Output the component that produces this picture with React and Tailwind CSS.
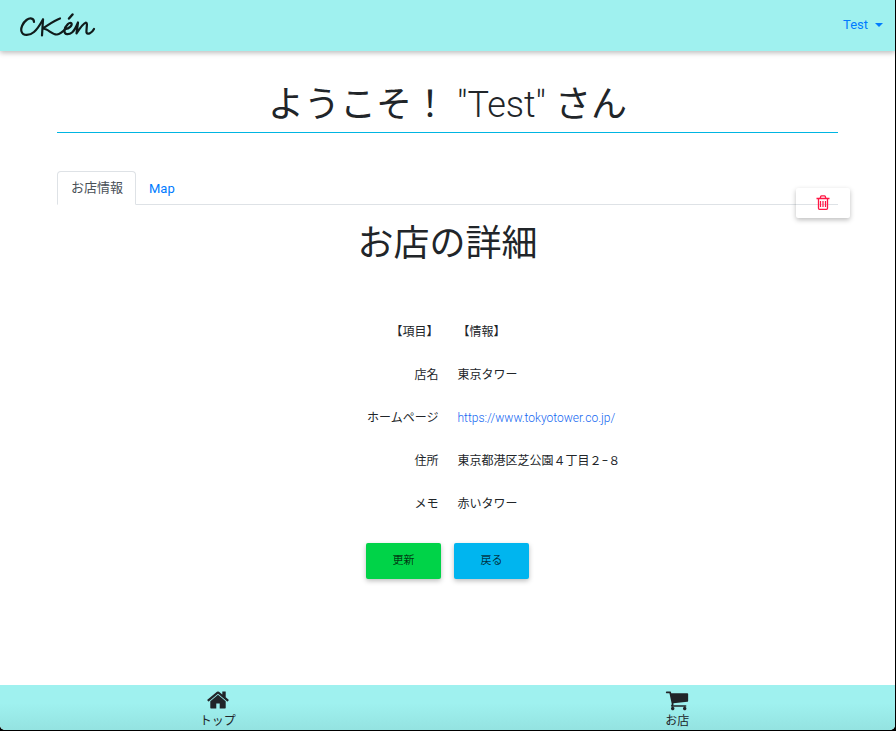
const rows = [
  ["【項目】", "【情報】"],
  ["店名", "東京タワー"],
  ["ホームページ", "https://www.tokyotower.co.jp/"],
  ["住所", "東京都港区芝公園４丁目２−８"],
  ["メモ", "赤いタワー"],
];

function Logo() {
  return (
    <svg
      viewBox="0 0 76 26"
      className="h-[26px] w-[76px]"
      fill="none"
      stroke="#101b1b"
      strokeWidth="2.200"
      strokeLinecap="round"
      strokeLinejoin="round"
      role="img"
      aria-label="CKén"
    >
      <path d="M14 9C14 5 10 4.500 6.500 7C2.500 10 .5 15.500 1.500 18.500C3 23.500 10 22.500 14 19C17.500 16 20.500 11 23 6.500" />
      <path d="M23 6.500L22 22.500M40 5.500C35 7 29 11.500 22.800 15.500C28 15.500 32 22 37 21.500C40.500 21 43.500 18 46 15.500" />
      <path d="M45.500 16C49 15.500 52.500 12.500 51.500 10.500C50 8.500 45 12.500 44.500 17.500C44 22.500 49.500 21.500 52 19.500C55 17 57 12 58 9.500L56.500 20.500C60 15 63 10.500 66 9.500C68 9.500 66 16.500 66.500 19.500C67.500 22 72 20 74 16" />
      <path d="M49 5.500L52.500 1.500" strokeWidth="2.400" />
    </svg>
  );
}

function TrashIcon() {
  return (
    <svg
      viewBox="0 0 14 15"
      className="h-[15px] w-[14px]"
      fill="none"
      stroke="currentColor"
      strokeWidth="1.300"
      strokeLinejoin="round"
      aria-hidden="true"
    >
      <path d="M.5 3.500H13.500M4.200 3.200L4.800 1.200Q5 .8 5.400 .8H8.600Q9 .8 9.200 1.200L9.800 3.200M2.500 3.500V13.300Q2.500 14.300 3.500 14.300H10.500Q11.500 14.300 11.500 13.300V3.500" />
      <path d="M4.500 6V12M7 6V12M9.500 6V12" strokeWidth="1.200" />
    </svg>
  );
}

function HomeIcon() {
  return (
    <svg viewBox="0 0 1792 1792" className="size-6" fill="currentColor" aria-hidden="true">
      <path d="M1472 992v480q0 26-19 45t-45 19h-384v-384h-256v384h-384q-26 0-45-19t-19-45v-480q0-1 .5-3t.5-3l575-474 575 474q1 2 1 6zm223-69l-62 74q-8 9-21 11h-3q-13 0-21-7l-692-577-692 577q-12 8-24 7-13-2-21-11l-62-74q-8-10-7-23.5t11-21.5l719-599q32-26 76-26t76 26l244 204v-195q0-14 9-23t23-9h192q14 0 23 9t9 23v408l219 182q10 8 11 21.5t-7 23.5z" />
    </svg>
  );
}

function CartIcon() {
  return (
    <svg viewBox="0 0 1792 1792" className="size-6" fill="currentColor" aria-hidden="true">
      <path d="M704 1536q0 52-38 90t-90 38-90-38-38-90 38-90 90-38 90 38 38 90zm896 0q0 52-38 90t-90 38-90-38-38-90 38-90 90-38 90 38 38 90zm128-1088v512q0 24-16.5 42.5t-40.5 21.5l-1044 122q13 60 13 70 0 16-24 64h920q26 0 45 19t19 45-19 45-45 19h-1024q-26 0-45-19t-19-45q0-11 8-31.5t16-36 21.5-40 15.5-29.5l-177-823h-204q-26 0-45-19t-19-45 19-45 45-19h256q16 0 28.5 6.5t19.5 15.5 13 24.500 8 26 5.5 29.5 4.5 26h1201q26 0 45 19t19 45z" />
    </svg>
  );
}

export default function App() {
  return (
    <div className="flex min-h-screen flex-col bg-black pr-px pb-px font-['Roboto','Noto_Sans_CJK_JP',sans-serif] text-[#212529]">
      <div className="flex grow flex-col overflow-hidden rounded-b-[5px] bg-white">
        <header className="flex h-[51px] shrink-0 items-center justify-between bg-[#9ff1ef] pr-3 pl-5 shadow-[0_2px_5px_rgba(0,0,0,0.26)]">
          <a href="#top">
            <Logo />
          </a>
          <button type="button" className="flex items-center gap-[7px] pb-[2px] text-[13px] text-[#007bff]">
            Test
            <span className="border-x-4 border-t-4 border-x-transparent border-t-current" />
          </button>
        </header>

        <main className="mx-[57px] grow">
          <h1 className="mt-6 border-b border-[#00b5e2] pt-[3px] text-center text-[36px] leading-[54px]">
            ようこそ！ <span className="font-light">"Test"</span> さん
          </h1>

          <div className="relative mt-[38px]">
            <nav className="flex border-b border-[#dee2e6] text-[13px] leading-5">
              <a
                href="#info"
                className="-mb-px rounded-t border border-[#dee2e6] border-b-white bg-white py-[6px] pr-3 pl-[13px] text-[#495057]"
              >
                お店情報
              </a>
              <a href="#map" className="px-[13px] pt-[8px] pb-[5px] text-[#007bff]">
                Map
              </a>
            </nav>
            <button
              type="button"
              aria-label="削除"
              className="absolute -right-3 top-[17px] flex h-[30px] w-[54px] items-center justify-center rounded-xs pb-[2px] text-[#ff1744] shadow-[0_2px_5px_rgba(0,0,0,0.26)]"
            >
              <TrashIcon />
            </button>
          </div>

          <h2 className="mt-3 text-center text-[36px] leading-[54px]">お店の詳細</h2>

          <table className="mt-[39px] w-full table-fixed text-xs">
            <tbody>
              {rows.map(([label, value]) => (
                <tr key={label} className="h-[43px]">
                  <th scope="row" className="pr-[9px] text-right font-normal">
                    {label}
                  </th>
                  <td className="pl-[10px]">
                    {value.startsWith("https") ? (
                      <a href={value} className="font-light text-[#1266f1]">
                        {value}
                      </a>
                    ) : (
                      value
                    )}
                  </td>
                </tr>
              ))}
            </tbody>
          </table>

          <div className="mt-[18px] flex justify-center gap-[13px] text-[11px] text-black/75">
            <button type="button" className="h-9 w-[75px] rounded-xs bg-[#00d348] shadow-[0_2px_5px_rgba(0,0,0,0.26)]">
              更新
            </button>
            <button type="button" className="h-9 w-[75px] rounded-xs bg-[#00b5ef] shadow-[0_2px_5px_rgba(0,0,0,0.26)]">
              戻る
            </button>
          </div>
        </main>

        <footer className="h-[45px] shrink-0 bg-linear-to-b from-[#9ff1ef] from-40% to-[#94e3e1] pt-[3px] text-xs leading-4">
          <div className="-mx-3 grid grid-cols-2">
            <a href="#top" className="flex flex-col items-center gap-px">
              <HomeIcon />
              トップ
            </a>
            <a href="#shops" className="flex flex-col items-center gap-px">
              <CartIcon />
              お店
            </a>
          </div>
        </footer>
      </div>
    </div>
  );
}
